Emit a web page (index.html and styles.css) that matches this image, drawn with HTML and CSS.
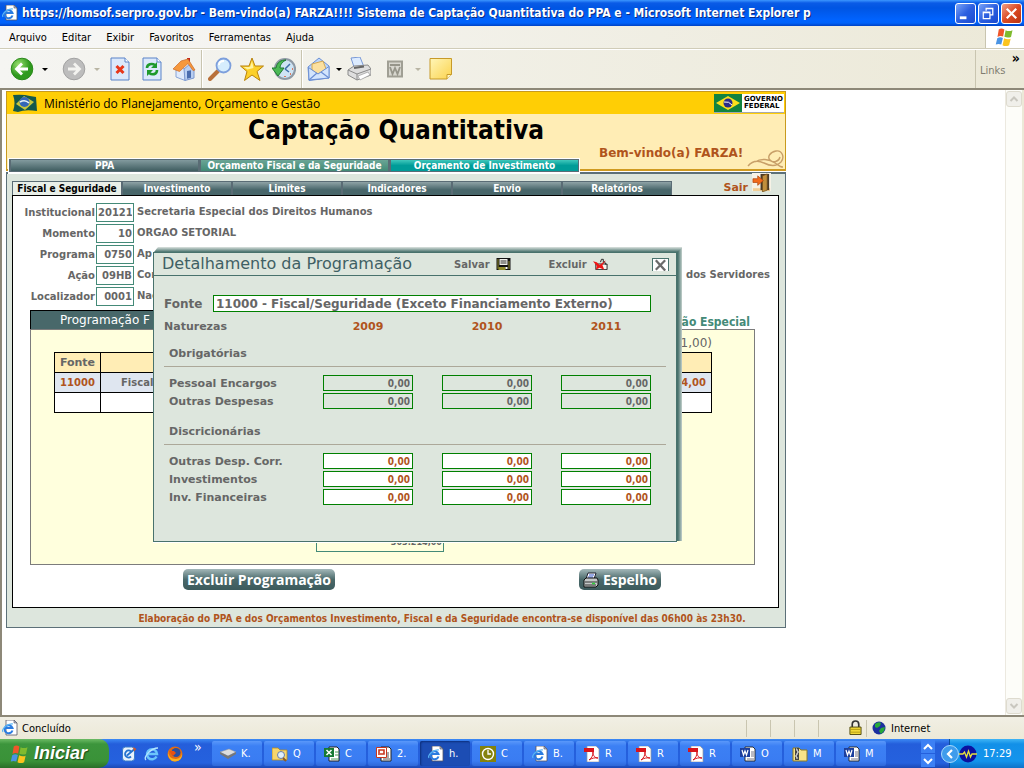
FILE: index.html
```html
<!DOCTYPE html>
<html lang="pt-BR">
<head>
<meta charset="utf-8">
<title>Captação Quantitativa</title>
<link rel="stylesheet" href="styles.css">
</head>
<body>
<svg class="sprite" aria-hidden="true">
  <symbol id="i-ie" viewBox="0 0 16 16">
    <path d="M4 0h8l3 3v12H4z" fill="#fff" stroke="#556" stroke-width=".8"/><path d="M12 0v3h3z" fill="#aab8cc" stroke="#556" stroke-width=".6"/>
    <path d="M10.500 10.500A4 4 0 1 1 10.500 8H3.500" fill="none" stroke="#2a7be0" stroke-width="2"/><path d="M1 12C-1 9 6 3 11 4" fill="none" stroke="#58b4f5" stroke-width="1.200"/>
  </symbol>
  <symbol id="i-pdf" viewBox="0 0 16 16">
    <path d="M3 0h9l3 3v13H3z" fill="#fff" stroke="#999" stroke-width=".7"/><path d="M0 2h10v4H0z" fill="#d8141c"/><path d="M5 14c3-2 4-5 4-8 0 4 2 6 5 6-3-.5-6 0-9 2z" fill="none" stroke="#d8141c"/>
  </symbol>
  <symbol id="i-word" viewBox="0 0 16 16">
    <path d="M5 1h8l2 2v12H5z" fill="#fff" stroke="#222" stroke-width=".9"/><path d="M11 6h3M11 8h3M11 10h3M7 13h7" stroke="#778"/><path d="M0 2h10v9H0z" fill="#1c3f9e"/><path d="M2 4l1.500 5L5 5l1.500 4L8 4" fill="none" stroke="#fff" stroke-width="1.200"/>
  </symbol>
  <symbol id="i-flag" viewBox="0 0 16 16">
    <path d="M3 2Q5 .5 7.500 2L6.500 7.500Q4 6.500 2 8z" fill="#f0562a"/><path d="M8.500 2.500Q11 4 14 2.500L12.800 8Q10 9 7.500 7.800z" fill="#7fbb2f"/><path d="M1.800 9Q4 7.500 6.300 8.700L5 14Q3 13 .6 14z" fill="#4a94e4"/><path d="M7.300 9Q10 10.300 12.500 9.300L11.300 14.500Q8.500 16 6 14.500z" fill="#fbc41d"/>
  </symbol>
</svg>

<div class="window">
  <header class="titlebar">
    <svg class="ic16"><use href="#i-ie"/></svg>
    <h1 class="titlebar-text">https://homsof.serpro.gov.br - Bem-vindo(a) FARZA!!!! Sistema de Captação Quantitativa do PPA e - Microsoft Internet Explorer p</h1>
    <button class="win-btn" aria-label="Minimizar"><svg viewBox="0 0 20 20"><path d="M4 13h7v3H4z" fill="#fff"/></svg></button>
    <button class="win-btn" aria-label="Restaurar"><svg viewBox="0 0 20 20"><path d="M7.500 7V4.500h7v7H12M4.500 8.500h7v7h-7zM7 5h8M4 9h8" fill="none" stroke="#fff" stroke-width="1.300"/></svg></button>
    <button class="win-btn win-close" aria-label="Fechar"><svg viewBox="0 0 20 20"><path d="M5 5l10 10M15 5L5 15" stroke="#fff" stroke-width="2.300"/></svg></button>
  </header>

  <nav class="menubar">
    <button>Arquivo</button><button>Editar</button><button>Exibir</button><button>Favoritos</button><button>Ferramentas</button><button>Ajuda</button>
    <span class="throbber"><svg viewBox="0 0 16 16"><use href="#i-flag"/></svg></span>
  </nav>

  <div class="toolbar">
    <button class="tool" aria-label="Voltar"><svg viewBox="0 0 24 24"><defs><radialGradient id="gg" cx=".35" cy=".3"><stop offset="0" stop-color="#9be070"/><stop offset="1" stop-color="#2f9a1e"/></radialGradient></defs><circle cx="12" cy="12" r="10.800" fill="url(#gg)" stroke="#2c8a1c"/><path d="M18 12H7M12 6.500L6.500 12l5.500 5.500" fill="none" stroke="#fff" stroke-width="2.800"/></svg></button>
    <button class="drop" aria-label="Histórico de voltar"></button>
    <button class="tool tool-fwd" aria-label="Avançar"><svg viewBox="0 0 24 24"><circle cx="12" cy="12" r="10.800" fill="#bdbdbd" stroke="#a2a2a2"/><path d="M6 12h11M12 6.500l5.500 5.500-5.500 5.500" fill="none" stroke="#f3f3f0" stroke-width="2.800"/></svg></button>
    <button class="drop dim" aria-label="Histórico de avançar"></button>
    <button class="tool" aria-label="Parar"><svg viewBox="0 0 24 24"><path d="M3 1h14l4 4v18H3z" fill="#dce9fb" stroke="#5b83c8"/><path d="M17 1v4h4" fill="#fff" stroke="#5b83c8"/><path d="M8.500 9l7 7M15.500 9l-7 7" stroke="#e8381a" stroke-width="3"/></svg></button>
    <button class="tool" aria-label="Atualizar"><svg viewBox="0 0 24 24"><path d="M3 1h14l4 4v18H3z" fill="#dce9fb" stroke="#5b83c8"/><path d="M17 1v4h4" fill="#fff" stroke="#5b83c8"/><path d="M7 11c0-4 5-5 8-3M17 13c0 5-5 5-8 3" fill="none" stroke="#1f9a2c" stroke-width="2.600"/><path d="M17 5v6h-6zM7 19v-6h6z" fill="#1f9a2c"/></svg></button>
    <button class="tool" aria-label="Página inicial"><svg viewBox="0 0 24 24"><path d="M15 1h3v5h-3z" fill="#c3281c"/><path d="M4 12v8l9 3.500V13l-5-6z" fill="#dfeafb" stroke="#8aa4d6"/><path d="M12 12l6-5 4 6v8l-9 2.500z" fill="#b9cff2" stroke="#7c98cf"/><path d="M15 14l4-.8v7.500l-4 1z" fill="#4a6cae"/><path d="M1 12L9 4l7-2 7 11-2 .5-5-7-8.500 8z" fill="#f6983c" stroke="#c9682a" stroke-width=".7"/></svg></button>
    <span class="sep"></span>
    <button class="tool" aria-label="Pesquisar"><svg viewBox="0 0 24 24"><path d="M10 14l-8 8" stroke="#b8703a" stroke-width="4" stroke-linecap="round"/><circle cx="15.500" cy="8.500" r="7" fill="#d6edfd" stroke="#7d9fdc" stroke-width="1.800"/><path d="M11 8c0-3 2-4 5-4" fill="none" stroke="#fff" stroke-width="1.800"/></svg></button>
    <button class="tool" aria-label="Favoritos"><svg viewBox="0 0 24 24"><path d="M12 1l3 8h8.500l-6.500 5.500L20 23.500 12 18l-7.500 5.500L7 14.500.5 9H9z" fill="#fcd02a" stroke="#b8820e"/><path d="M12 4l1.500 7-6 1.500L3.500 10H10z" fill="#fff3a0"/></svg></button>
    <button class="tool" aria-label="Histórico"><svg viewBox="0 0 24 24"><circle cx="13" cy="12" r="10" fill="#cfe4f4" stroke="#8f9aa5" stroke-width="2.200"/><path d="M13 12l5-5M13 12l4 3" fill="none" stroke="#3d6ea8" stroke-width="1.500"/><path d="M18 17h1M13 19v1M20 12h1" stroke="#e0562a" stroke-width="1.500"/><path d="M0 11h4C5 5 9 3 14 3c-4 2-6 5-6 8h4l-6 8z" fill="#4cb956" stroke="#1e7a30"/></svg></button>
    <span class="sep"></span>
    <button class="tool tool-mail" aria-label="Correio"><svg viewBox="0 0 24 24"><path d="M1 10L12 1l10 8v12L2 23.500z" fill="#bcd6fa" stroke="#6b8fd4"/><path d="M5 7l11-3 3 8-8 5-6-4z" fill="#fbe0a0" stroke="#d3a852"/><path d="M1.500 10.500L11 17l11-7.500v11.500L2 23z" fill="#d3e5fd" stroke="#6b8fd4"/><path d="M2 23l8-7M22 21l-8-6" fill="none" stroke="#6b8fd4" stroke-width="1.200"/></svg></button>
    <button class="drop drop-mail" aria-label="Opções de correio"></button>
    <button class="tool" aria-label="Imprimir"><svg viewBox="0 0 24 24"><path d="M4 1l9-1 4 10-9 3z" fill="#dcebff" stroke="#7a99d6"/><path d="M1 13l6-4 14-1 3 4v6l-14 5-9-5z" fill="#dedede" stroke="#8b8b8b"/><path d="M1 13l9 4 14-5M10 17v6" fill="none" stroke="#8b8b8b"/><path d="M11 19l10-4 2 3-10 5z" fill="#fff" stroke="#999" stroke-width=".7"/><path d="M7 11l10-1.500" stroke="#666" stroke-width="2"/></svg></button>
    <button class="tool tool-word" aria-label="Editar com Word"><svg viewBox="0 0 24 24"><path d="M5 4.500h14v15H5z" fill="#d8d7cf" stroke="#a09f94" stroke-width="2"/><path d="M7 8h10M7 10l2.500 7L12 11l2.500 6L17 10" fill="none" stroke="#96958a" stroke-width="1.800"/></svg></button>
    <button class="drop dim" aria-label="Opções de edição"></button>
    <button class="tool" aria-label="Discutir"><svg viewBox="0 0 24 24"><defs><linearGradient id="note" x2="1" y2="1"><stop offset="0" stop-color="#fff6b8"/><stop offset="1" stop-color="#fbd34e"/></linearGradient></defs><path d="M1 1.500h21.500v16L18 22H1z" fill="url(#note)" stroke="#c79a28"/><path d="M18 22v-4.500h4.500" fill="#fff6c4" stroke="#c79a28"/></svg></button>
    <div class="links"><span class="more">»</span><span>Links</span></div>
  </div>

  <div class="viewport">
    <main class="page">
      <header class="page-head">
        <div class="brand">
          <svg class="brand-flag" viewBox="0 0 26 18"><path d="M1 1q10-1 17 1l6 1 1 14q-12-2-19 1l-5-1q3-8 0-16z" fill="#14584c"/><path d="M4 10L12 2l10 6-9 8z" fill="#c9c73c"/><circle cx="12.500" cy="8" r="5" fill="#3467b8"/><path d="M8 8q5-3 9 1" stroke="#e8f2f6" stroke-width="1.600" fill="none"/></svg>
          <span class="brand-name">Ministério do Planejamento, Orçamento e Gestão</span>
          <span class="gov"><svg viewBox="0 0 28 18"><path d="M0 0h28v18H0z" fill="#12833f"/><path d="M2 9L14 2l12 7-12 7z" fill="#fbdf1c"/><circle cx="14" cy="9" r="4.500" fill="#2b2b86"/><path d="M10 8q5-1 8 3" stroke="#fff" fill="none"/></svg><b>GOVERNO<br>FEDERAL</b></span>
        </div>
        <h2 class="page-title">Captação Quantitativa</h2>
        <div class="head-row">
          <nav class="tabs-main"><a href="#">PPA</a><a href="#" class="green">Orçamento Fiscal e da Seguridade</a><a href="#" class="teal">Orçamento de Investimento</a></nav>
          <span class="welcome">Bem-vindo(a) FARZA!</span>
          <svg class="curl" viewBox="0 0 38 20"><path d="M1 17c5-6 10-6 16-3s12 4 17-1c4-5 1-12-5-11s-9 6-6 9 9 2 10-3M8 13c6-4 14-3 20 1s6 4 8 4" fill="none" stroke="#c89f68" stroke-width="1.400"/></svg>
        </div>
      </header>

      <section class="page-body">
        <div class="sub-row">
          <nav class="tabs-sub"><a href="#" class="on">Fiscal e Seguridade</a><a href="#">Investimento</a><a href="#">Limites</a><a href="#">Indicadores</a><a href="#">Envio</a><a href="#">Relatórios</a></nav>
          <a href="#" class="exit">Sair<svg viewBox="0 0 20 20"><path d="M0 0h20v19H0z" fill="#f6f2e6"/><path d="M1 16h18v3H1z" fill="#f2cf97"/><path d="M9 1h9v17H9z" fill="#4a3a28"/><path d="M11 3l5-2v17l-5 2z" fill="#c18f3c" stroke="#6e4b18" stroke-width=".7"/><path d="M1 6h5V3l6 5-6 5v-3H1z" fill="#f26a1b" stroke="#a8400a" stroke-width=".7"/></svg></a>
        </div>

        <div class="panel">
          <div class="fields">
            <label for="inst">Institucional</label><input id="inst" value="20121"><span>Secretaria Especial dos Direitos Humanos</span>
            <label for="mom">Momento</label><input id="mom" value="10"><span>ORGAO SETORIAL</span>
            <label for="prog">Programa</label><input id="prog" value="0750"><span>Ap</span>
            <label for="acao">Ação</label><input id="acao" value="09HB"><span class="split"><span>Con</span><span>dos Servidores</span></span>
            <label for="loc">Localizador</label><input id="loc" value="0001"><span>Nac</span>
          </div>

          <div class="prog-tabs"><a href="#" class="prog-on">Programação F</a><a href="#" class="prog-off">ão Especial</a></div>
          <div class="prog">
            <p class="unit">1,00)</p>
            <table class="grid">
              <tr><th class="c-fonte">Fonte</th><th></th></tr>
              <tr class="row"><td class="code">11000</td><td><span class="split"><span>Fiscal</span><b>4,00</b></span></td></tr>
              <tr><td></td><td></td></tr>
            </table>
            <input class="total" aria-label="Total" value="303.214,00">
          </div>

          <div class="actions">
            <button class="pill">Excluir Programação</button>
            <button class="pill"><svg viewBox="0 0 16 16"><path d="M5 1h8l-2 6H3z" fill="#fff" stroke="#223"/><path d="M6 3h5M5 5h5" stroke="#3355cc"/><path d="M1 8l2-2h11l1 2v5l-2 2H1z" fill="#c4c8c8" stroke="#111"/><path d="M2 10h12M2 13h11" stroke="#333"/><path d="M9 11.500h3" stroke="#2fd03a" stroke-width="1.500"/></svg>Espelho</button>
          </div>

          <section class="dialog" role="dialog" aria-label="Detalhamento da Programação">
            <header class="dialog-head">
              <h3>Detalhamento da Programação</h3>
              <button class="act">Salvar<svg viewBox="0 0 14 12"><path d="M0 0h14v12H0z" fill="#111"/><path d="M1 1h1v10H1zM12 3h1v8h-1z" fill="#8f8c2c"/><path d="M3 1h8v6H3z" fill="#f0f0ea"/><path d="M4 3h6M4 5h6" stroke="#333"/><path d="M2 9h7v3H2z" fill="#8f8c2c"/><path d="M9 9h2v2H9z" fill="#fff"/></svg></button>
              <button class="act">Excluir<svg viewBox="0 0 16 12"><path d="M3 6h12v6H3z" fill="#f4f4ee" stroke="#222"/><path d="M8 4l1-3 2 0v4M12 3l2 4" fill="none" stroke="#222"/><path d="M0 3l4 1 3 3 7-5-4 5 2 5-5-2-4 2 1-4z" fill="#ee1515"/></svg></button>
              <button class="dlg-close" aria-label="Fechar detalhamento"><svg viewBox="0 0 16 12"><path d="M3 1l10 11M13 1L3 11" stroke="#6b6b6b" stroke-width="2.400"/></svg></button>
            </header>
            <div class="dialog-body">
              <div class="source"><label for="fonte">Fonte</label><input id="fonte" value="11000 - Fiscal/Seguridade (Exceto Financiamento Externo)"></div>
              <div class="nat nat-head"><span>Naturezas</span><b>2009</b><b>2010</b><b>2011</b></div>
              <h4>Obrigatórias</h4>
              <div class="nat"><span>Pessoal Encargos</span><input aria-label="Pessoal Encargos 2009" value="0,00" readonly><input aria-label="Pessoal Encargos 2010" value="0,00" readonly><input aria-label="Pessoal Encargos 2011" value="0,00" readonly></div>
              <div class="nat"><span>Outras Despesas</span><input aria-label="Outras Despesas 2009" value="0,00" readonly><input aria-label="Outras Despesas 2010" value="0,00" readonly><input aria-label="Outras Despesas 2011" value="0,00" readonly></div>
              <h4 class="second">Discricionárias</h4>
              <div class="nat"><span>Outras Desp. Corr.</span><input aria-label="Outras Desp. Corr. 2009" value="0,00"><input aria-label="Outras Desp. Corr. 2010" value="0,00"><input aria-label="Outras Desp. Corr. 2011" value="0,00"></div>
              <div class="nat"><span>Investimentos</span><input aria-label="Investimentos 2009" value="0,00"><input aria-label="Investimentos 2010" value="0,00"><input aria-label="Investimentos 2011" value="0,00"></div>
              <div class="nat"><span>Inv. Financeiras</span><input aria-label="Inv. Financeiras 2009" value="0,00"><input aria-label="Inv. Financeiras 2010" value="0,00"><input aria-label="Inv. Financeiras 2011" value="0,00"></div>
            </div>
          </section>
        </div>
        <footer class="notice">Elaboração do PPA e dos Orçamentos Investimento, Fiscal e da Seguridade encontra-se disponível das 06h00 às 23h30.</footer>
      </section>
    </main>
    <div class="scroll"><button aria-label="Rolar para cima"><svg viewBox="0 0 10 10"><path d="M1.500 7L5 3.500 8.500 7"/></svg></button><button aria-label="Rolar para baixo"><svg viewBox="0 0 10 10"><path d="M1.500 3L5 6.500 8.500 3"/></svg></button></div>
  </div>

  <div class="status">
    <svg class="ic16"><use href="#i-ie"/></svg><span class="status-text">Concluído</span>
    <i></i><i></i><i></i>
    <span class="cell lock"><svg viewBox="0 0 14 16"><path d="M3.500 7V4a3.500 3.500 0 0 1 7 0v3" fill="none" stroke="#333" stroke-width="1.800"/><path d="M1 7h12v8H1z" fill="#f1d936" stroke="#4c450c"/><path d="M2 9.500h10M2 12.500h10" stroke="#b39a14"/></svg></span>
    <span class="cell zone"><svg viewBox="0 0 14 14"><circle cx="7" cy="7" r="6.500" fill="#1c2f9e"/><path d="M3 3q4-3 6-1L8 5 5 7 3 6zM9 7l4-1-1 4-3 3-2-3z" fill="#28a83a"/></svg>Internet</span>
  </div>

  <footer class="taskbar">
    <button class="start"><svg viewBox="0 0 16 16"><use href="#i-flag"/></svg>Iniciar</button>
    <div class="quick">
      <button aria-label="Mostrar área de trabalho"><svg viewBox="0 0 16 16"><rect x="1.500" y="1" width="12" height="14" rx="3" fill="#e8f2fc" stroke="#3b7cc8"/><path d="M10 5.500a3.500 3.500 0 1 0 0 5M6 9.500l7-6" fill="none" stroke="#2372cf" stroke-width="1.800"/><path d="M12 1l3.500 2-2.500 2.500z" fill="#d0582a"/></svg></button>
      <button aria-label="Internet Explorer"><svg viewBox="0 0 16 16"><path d="M12.500 10.500A5 5 0 1 1 13 8H4" fill="none" stroke="#6cc6fb" stroke-width="2.500"/><path d="M2 14C-1 11 7 2 14 2" fill="none" stroke="#b4e5ff" stroke-width="1.300"/></svg></button>
      <button aria-label="Firefox"><svg viewBox="0 0 16 16"><circle cx="8" cy="8" r="7.500" fill="#e36a12"/><circle cx="9" cy="6.500" r="4.500" fill="#2a4f9e"/><path d="M1 4q0 9 8 9 6-1 6-7 1 9-7 9.500Q0 15 1 4z" fill="#f9b21f"/><path d="M2 5l5 0 2 2-3 3z" fill="#e9510f"/></svg></button>
      <span>»</span>
    </div>
    <div class="tasks">
      <button><svg viewBox="0 0 16 16"><path d="M0 6l9-3 7 3-8 4z" fill="#ddd" stroke="#999" stroke-width=".5"/><path d="M0 6v2l8 5 8-5V6l-8 4z" fill="#777"/></svg>K.</button>
      <button><svg viewBox="0 0 16 16"><path d="M0 2h6l2 2h7v10H0z" fill="#f5d66e" stroke="#b18a24" stroke-width=".8"/><circle cx="9" cy="9" r="3.500" fill="#dff0fd" stroke="#667da8"/><path d="M11 12l3 3" stroke="#8a5a2a" stroke-width="2"/></svg>Q</button>
      <button><svg viewBox="0 0 16 16"><path d="M5 1h8l2 2v12H5z" fill="#fff" stroke="#222"/><path d="M11 6h4M11 9h4M7 13h8" stroke="#4a9a5a"/><path d="M0 2h10v9H0z" fill="#167a34"/><path d="M2.500 4l5 5M7.500 4l-5 5" stroke="#fff" stroke-width="1.500"/></svg>C</button>
      <button><svg viewBox="0 0 16 16"><path d="M5 1h8l2 2v12H5z" fill="#fff" stroke="#222"/><path d="M7 13h7M12 6v6" stroke="#555"/><path d="M.5 1.500h10v10H.5z" fill="#fff" stroke="#c8361e"/><path d="M3 9V4h5v4H4" fill="none" stroke="#c8361e" stroke-width="1.600"/></svg>2.</button>
      <button class="active"><svg viewBox="0 0 16 16"><use href="#i-ie"/></svg>h.</button>
      <button><svg viewBox="0 0 16 16"><path d="M0 0h16v16H0z" fill="#84820c"/><circle cx="8" cy="8" r="5.500" fill="#84820c" stroke="#fff" stroke-width="1.400"/><path d="M8 4v4h3" fill="none" stroke="#fff" stroke-width="1.300"/></svg>C</button>
      <button><svg viewBox="0 0 16 16"><use href="#i-ie"/></svg>B.</button>
      <button><svg viewBox="0 0 16 16"><use href="#i-pdf"/></svg>R</button>
      <button><svg viewBox="0 0 16 16"><use href="#i-pdf"/></svg>R</button>
      <button><svg viewBox="0 0 16 16"><use href="#i-pdf"/></svg>R</button>
      <button><svg viewBox="0 0 16 16"><use href="#i-word"/></svg>O</button>
      <button><svg viewBox="0 0 16 16"><path d="M1 2h6l2 2h6v11H1z" fill="#f7e38a" stroke="#8d7a22"/><path d="M3 2h4v12H3z" fill="#444"/><path d="M4 3h1v2h1v2H5v2H4v2h1v2" fill="none" stroke="#eee"/></svg>M</button>
      <button><svg viewBox="0 0 16 16"><use href="#i-word"/></svg>M</button>
    </div>
    <div class="spin"><button aria-label="Anterior"><svg viewBox="0 0 10 10"><path d="M1 7l4-4 4 4"/></svg></button><button aria-label="Próximo"><svg viewBox="0 0 10 10"><path d="M1 3l4 4 4-4"/></svg></button></div>
    <div class="tray">
      <button aria-label="Mostrar ícones ocultos"><svg viewBox="0 0 18 18"><circle cx="9" cy="9" r="8.500" fill="#3f9cec" stroke="#a6d8fb"/><path d="M11 5L7 9l4 4" fill="none" stroke="#fff" stroke-width="2.200"/></svg></button>
      <svg viewBox="0 0 18 18"><circle cx="9" cy="9" r="8.500" fill="#0b12a0"/><path d="M0 9h4l1.500-2 2 5 2-6 2 6 1.500-3h5" fill="none" stroke="#e8e23c" stroke-width="1.300"/></svg>
      <span>17:29</span>
    </div>
  </footer>
</div>
</body>
</html>
```
FILE: styles.css
```css
* { box-sizing: border-box; }
body { margin: 0; font-family: "DejaVu Sans", sans-serif; font-size: 11px; color: #000; }
button { border: 0; padding: 0; margin: 0; background: none; font: inherit; color: inherit; }
a { color: inherit; text-decoration: none; white-space: nowrap; }
h1, h2, h3, h4, p { margin: 0; font-weight: normal; }
svg { display: block; flex: none; }
.sprite { position: absolute; width: 0; height: 0; }
.ic16 { width: 16px; height: 16px; }
.window { display: flex; flex-direction: column; height: 100vh; overflow: hidden; background: #ece9d8; }

/* Title bar */
.titlebar { display: flex; align-items: center; gap: 2px; height: 26px; padding: 0 2px; flex: none; background: linear-gradient(#3c96ff 0, #0a5be6 3px, #0055e3 8px, #0063ff 20px, #0062fa 23px, #0042c4 26px); }
.titlebar-text { flex: 1; min-width: 0; margin-left: 2px; overflow: hidden; white-space: nowrap; font: bold 12px "DejaVu Sans Condensed", "DejaVu Sans", sans-serif; color: #fff; text-shadow: 1px 1px #0a2a80; }
.win-btn { width: 21px; height: 21px; border: 1px solid #fff; border-radius: 3px; background: linear-gradient(135deg, #7aa4f8, #2c5fe0 50%, #1a4ad0); }
.win-close { background: linear-gradient(135deg, #f0a088, #dc4a24 50%, #b83412); }

/* Menu bar */
.menubar { display: flex; align-items: center; height: 23px; flex: none; padding-left: 9px; gap: 15px; background: linear-gradient(90deg, #f7f7f7, #ece9d8); border-bottom: 1px solid #d0ccb8; font-family: "DejaVu Sans Condensed", sans-serif; }
.throbber { display: flex; justify-content: center; align-items: center; margin-left: auto; width: 39px; height: 22px; background: #fff; border-left: 1px solid #c9c5b0; }
.throbber svg { width: 20px; height: 20px; }

/* Toolbar */
.toolbar { display: flex; align-items: center; height: 41px; flex: none; padding-left: 6px; background: linear-gradient(90deg, #f5f5f2, #ece9d8); border-top: 1px solid #fff; border-bottom: 2px solid #8d8878; }
.tool { display: flex; justify-content: center; width: 32px; flex: none; }
.tool svg { width: 24px; height: 24px; }
.tool-fwd { margin-left: 6px; }
.tool-mail { width: 30px; }
.tool-word { margin-left: 4px; }
.drop { width: 14px; height: 24px; flex: none; display: flex; justify-content: center; align-items: center; }
.drop::before { content: ""; border: 3px solid transparent; border-top-color: #000; border-bottom: 0; }
.drop.dim::before { border-top-color: #b9b5a4; }
.drop-mail { width: 9px; }
.sep { width: 2px; margin: 0 1px; align-self: stretch; border-left: 1px solid #c9c5b0; border-right: 1px solid #fff; }
.links { display: flex; flex-direction: column; align-self: stretch; justify-content: center; gap: 2px; margin-left: auto; width: 49px; padding: 0 4px 8px; border-left: 1px solid #c9c5b0; color: #7f7c70; font: 11px/12px "DejaVu Sans Condensed", sans-serif; }
.more { align-self: flex-end; color: #000; font-weight: bold; font-size: 14px; line-height: 10px; }

/* Document area */
.viewport { display: flex; flex: 1; min-height: 0; background: #fff; border-left: 2px solid #8d8878; border-right: 2px solid #ece9d8; overflow: hidden; }
.page { width: 780px; margin: 1px auto 0 4px; }
.scroll { display: flex; flex-direction: column; justify-content: space-between; width: 17px; flex: none; background: #fdfdf9; border-left: 1px solid #ece9e0; padding: 1px 0; }
.scroll button { height: 16px; border: 1px solid #dedbcf; border-radius: 3px; background: #f0efea; display: flex; justify-content: center; align-items: center; }
.scroll svg { width: 10px; height: 10px; fill: none; stroke: #c9c7bf; stroke-width: 2px; }

/* Page header */
.page-head { position: relative; z-index: 1; height: 80px; background: #ffedb5; border: 1px solid #c89a1e; border-bottom: 2px solid #d09a20; display: flex; flex-direction: column; }
.brand { display: flex; align-items: center; height: 22px; flex: none; padding: 0 1px 0 5px; background: #ffce05; font-family: "Open Sans", sans-serif; font-size: 12px; }
.brand-flag { width: 26px; height: 18px; }
.brand-name { margin-left: 6px; }
.gov { display: flex; align-items: center; gap: 2px; margin-left: auto; background: #fff; border-bottom: 1px solid #aaa; font-family: "DejaVu Sans", sans-serif; font-size: 7px; line-height: 7px; padding-right: 1px; }
.gov svg { width: 28px; height: 18px; }
.page-title { text-align: center; font: bold 26px/32px "DejaVu Sans Condensed", "DejaVu Sans", sans-serif; }
.head-row { display: flex; align-items: flex-end; margin-top: auto; height: 23px; }
.tabs-main { display: flex; height: 16px; margin: 0 0 -5px 1px; border: 1px solid #fff; border-width: 1px 1px 2px; }
.tabs-main a { width: 190px; border: 1px solid #5a6c75; border-width: 1px 1px 1px 2px; background: linear-gradient(#829a9e, #3f5d60); color: #fff; text-align: center; font: bold 10px/12px "DejaVu Sans Condensed", "DejaVu Sans", sans-serif; }
.tabs-main .green { background: linear-gradient(#6aa595, #418a76); }
.tabs-main .teal { background: linear-gradient(#40c8bc, #009c98 50%); }
.welcome { margin-left: 19px; align-self: flex-start; color: #b0541c; font-weight: bold; font-size: 12px; }
.curl { width: 38px; height: 20px; margin-left: auto; }

/* Page body */
.page-body { border: 1px solid #5c7078; border-top-width: 2px; margin-top: 1px; background: #dde6dd; }
.sub-row { display: flex; align-items: flex-end; height: 21px; padding: 0 14px 0 5px; }
.tabs-sub { display: flex; height: 14px; }
.tabs-sub a { width: 110px; border: 1px solid #5a6c75; border-bottom: 0; background: linear-gradient(#8fa3a6, #48666a 60%); color: #fff; text-align: center; font: bold 10px/13px "DejaVu Sans Condensed", "DejaVu Sans", sans-serif; }
.tabs-sub .on { background: #e9efe8; color: #000; }
.exit { display: flex; align-items: flex-end; gap: 4px; margin-left: auto; color: #b0541c; font-weight: bold; line-height: 14px; }
.exit svg { width: 19px; height: 19px; margin-bottom: 3px; }
.panel { position: relative; margin: 0 6px 0 5px; height: 413px; border: 1px solid #000; background: #fff; }
.fields { display: grid; grid-template-columns: 82px 38px 1fr; column-gap: 1px; row-gap: 2px; padding: 7px 8px 0 0; align-items: center; color: #666; font-weight: bold; font-size: 10px; line-height: 14px; }
.fields label { text-align: right; }
.fields > span { padding-left: 2px; padding-bottom: 2px; }
.fields input { width: 38px; height: 19px; padding: 0 1px; border: 1px solid #448a78; background: #fff; color: #666; font: bold 10px "DejaVu Sans", sans-serif; text-align: right; }
.split { display: flex; justify-content: space-between; }
.prog-tabs { display: flex; justify-content: space-between; align-items: flex-end; margin: 4px 23px 0 17px; height: 19px; }
.prog-on { width: 174px; padding-left: 29px; background: #48686a; border: 1px solid #000; border-bottom: 0; color: #fff; font-size: 12px; line-height: 18px; }
.prog-off { margin-right: 5px; color: #448a78; font: bold 12px/14px "DejaVu Sans Condensed", sans-serif; }
.prog { display: flex; flex-direction: column; height: 236px; margin: 0 23px 0 17px; padding: 5px 42px 0 23px; border: 1px solid #7c7c7c; background: #ffffdd; color: #666; }
.unit { text-align: right; font-size: 12px; line-height: 17px; }
.grid { width: 100%; border-collapse: collapse; table-layout: fixed; font-weight: bold; }
.grid th, .grid td { height: 20px; padding: 0; border: 1px solid #000; background: #fff; }
.grid th { background: #ffedb5; }
.grid .c-fonte { width: 46px; }
.grid .row td { background: #dfe6f0; padding: 0 5px 0 20px; font-size: 10px; }
.grid .row .code { padding: 0; text-align: center; }
.grid .row .code, .grid b { color: #b0541c; }
.total { align-self: flex-start; width: 128px; height: 18px; margin: 121px 0 0 262px; border: 1px solid #448a78; background: #ffffdd; color: #666; text-align: right; font: bold 9px "DejaVu Sans Condensed", sans-serif; padding: 0 1px 3px; }
.actions { display: flex; justify-content: space-between; padding: 4px 117px 0 170px; }
.pill { display: flex; align-items: center; gap: 4px; height: 21px; padding: 0 4px; border-radius: 5px; background: linear-gradient(#a3b8b9, #4a696a 50%, #3c5a5c); color: #fff; font: bold 14px "Open Sans", sans-serif; }
.pill svg { width: 16px; height: 16px; }
.notice { padding: 3px 0 1px 92px; text-align: center; color: #b0541c; font: bold 10px/15px "DejaVu Sans Condensed", sans-serif; }

/* Detail dialog floating over the panel */
.dialog { position: absolute; left: 140px; top: 56px; width: 524px; height: 290px; border: 1px solid #48726c; background: #dde6dd; box-shadow: 0 1px #fff; color: #666; font-weight: bold; }
.dialog::before { content: ""; position: absolute; left: 0; right: -6px; top: -6px; height: 5px; background: linear-gradient(#dde3e0, #48726c); clip-path: polygon(4px 0, 100% 0, 100% 100%, 0 100%); }
.dialog::after { content: ""; position: absolute; top: -5px; bottom: 0; right: -6px; width: 6px; background: linear-gradient(90deg, #48726c 33%, #c3d0cc); clip-path: polygon(100% 0, 100% 100%, 0 100%, 0 5px); }
.dialog-head { display: flex; align-items: center; height: 23px; padding: 0 7px 0 8px; border-bottom: 1px solid #48726c; }
.dialog-head h3 { width: 292px; color: #3f6064; font-size: 16px; line-height: 20px; white-space: nowrap; }
.act { display: flex; align-items: center; gap: 6px; margin-right: 38px; font: bold 10px "DejaVu Sans", sans-serif; }
.act svg { width: 15px; height: 12px; }
.dlg-close { margin-left: auto; width: 17px; height: 13px; border: 1px solid #48726c; border-bottom: 0; background: #fff; }
.dlg-close svg { width: 15px; height: 12px; }
.dialog-body { padding: 19px 10px 0; }
.source { display: flex; align-items: center; margin-right: 15px; }
.source label { width: 49px; font-size: 12px; }
.source input { flex: 1; min-width: 0; height: 17px; border: 1px solid #008000; background: #fff; padding: 0 2px; color: #666; font: bold 12px "DejaVu Sans", sans-serif; }
.nat { display: grid; grid-template-columns: 125px repeat(3, 90px); column-gap: 29px; justify-content: start; align-items: center; height: 18px; padding-left: 5px; }
.nat-head { height: 28px; padding-left: 0; grid-template-columns: 130px repeat(3, 90px); }
.nat-head b { text-align: center; color: #b0541c; }
.nat input { width: 90px; height: 16px; border: 1px solid #008000; background: #fff; padding: 0 2px; text-align: right; color: #b0541c; font: bold 10px "DejaVu Sans Condensed", sans-serif; }
.nat input:read-only { background: #dde6dd; color: #666; }
.dialog h4 { height: 27px; padding: 0 5px; margin-bottom: 7px; border-bottom: 1px solid #aca899; font-weight: bold; line-height: 27px; }
.dialog .second { margin-top: 8px; }

/* Status bar */
.status { display: flex; align-items: center; height: 24px; flex: none; padding-left: 2px; border-top: 2px solid #8d8878; background: linear-gradient(#f1efe4, #ece9d8); font-family: "DejaVu Sans Condensed", sans-serif; }
.status-text { flex: 1; margin-left: 4px; }
.status i, .cell { width: 24px; height: 17px; border-left: 1px solid #c9c5b0; }
.status .cell { display: flex; align-items: center; gap: 5px; }
.status .lock { width: 48px; padding-left: 30px; }
.status .zone { width: 158px; padding-left: 5px; }
.lock svg { width: 13px; height: 16px; }
.zone svg { width: 14px; height: 14px; }

/* Taskbar */
.taskbar { display: flex; height: 29px; flex: none; background: linear-gradient(#3c8af5 0, #245edb 5px, #2561de 24px, #1c48b4); color: #fff; font-family: "DejaVu Sans Condensed", sans-serif; }
.start { display: flex; align-items: center; gap: 4px; width: 109px; padding-left: 10px; border-radius: 0 10px 10px 0; background: linear-gradient(#6cbb64 0, #3c953c 5px, #3a9238 22px, #2a6e28); font: italic bold 18px "Liberation Sans", sans-serif; text-shadow: 1px 1px 1px #1c4a1a; }
.start svg { width: 20px; height: 20px; }
.quick { display: flex; align-items: center; gap: 7px; width: 103px; padding-left: 12px; }
.quick svg { width: 16px; height: 16px; }
.quick span { font-size: 14px; align-self: flex-start; margin-left: 4px; }
.tasks { display: flex; gap: 2px; align-items: center; flex: 1; min-width: 0; }
.tasks button { display: flex; align-items: center; gap: 5px; width: 50px; height: 25px; padding-left: 8px; border-radius: 2px; background: linear-gradient(#5a98fa, #3c80f4 5px, #3a7cf2 20px, #2f68d8); flex: none; }
.tasks .active { background: #1c4db4; box-shadow: inset 1px 1px 2px #0c2f7c; }
.tasks svg { width: 16px; height: 16px; }
.spin { display: flex; flex-direction: column; gap: 1px; padding: 1px 0; width: 14px; margin-right: 14px; }
.spin button { flex: 1; background: #3c80f4; display: flex; align-items: center; justify-content: center; }
.spin svg { width: 10px; height: 10px; fill: none; stroke: #fff; stroke-width: 2px; }
.tray { display: flex; align-items: center; width: 75px; background: linear-gradient(#3fb5f5 0, #1290e8 5px, #1494ec 22px, #0f72c8); border-left: 1px solid #0a4c9c; }
.tray svg { width: 18px; height: 18px; }
.tray button { margin-left: -9px; }
.tray span { margin-left: 6px; }
```
